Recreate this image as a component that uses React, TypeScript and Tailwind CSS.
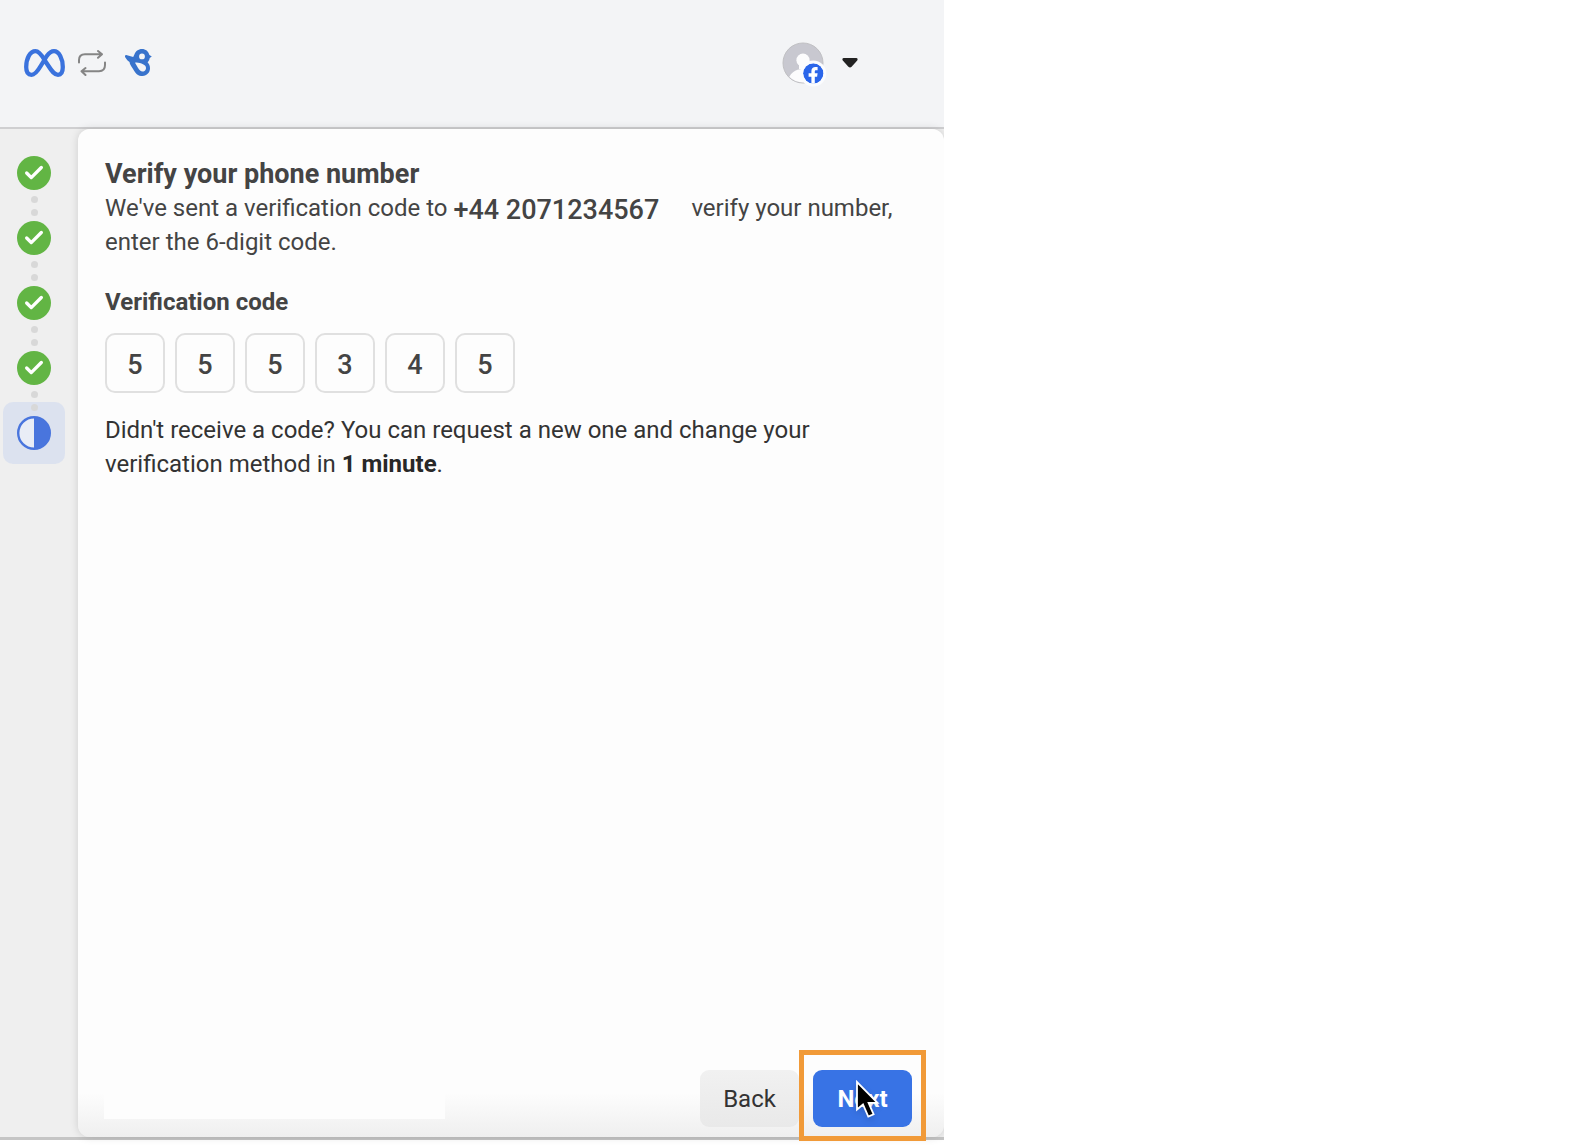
import React, { useState } from "react";
import { Check } from "lucide-react";

const steps = [
  { id: "business", label: "Business details", done: true },
  { id: "account", label: "WhatsApp account", done: true },
  { id: "profile", label: "Business profile", done: true },
  { id: "phone", label: "Phone number", done: true },
  { id: "verify", label: "Verify number", done: false },
];

function MetaLogo() {
  return (
    <svg viewBox="0 0 41 28" className="h-7 w-[41px]" fill="none" aria-hidden="true">
      <path
        d="M20.5 11C17 5 14.5 2.2 11.5 2.2C6 2.2 2.2 9.5 2.2 18C2.2 23 4.2 25.8 7.5 25.8C11 25.8 13.5 22.5 17 16.5L22.8 7C25.5 3.3 27.5 2.2 30 2.2C35 2.2 38.8 9.5 38.8 18C38.8 23 37 25.8 34 25.8C30.5 25.8 28 22.5 24.5 17Z"
        stroke="#3a72dd"
        strokeWidth="4.3"
        strokeLinejoin="round"
      />
    </svg>
  );
}

function SwapIcon() {
  return (
    <svg viewBox="0 0 28 26" className="h-[26px] w-7" fill="none" stroke="#858585" strokeWidth="2" strokeLinecap="round" strokeLinejoin="round" aria-hidden="true">
      <path d="M1 12.5V10Q1 4.2 7 4.2H23.5M20 1L24 4.2L20 7.8" />
      <path d="M27 12.5V15Q27 21.2 21 21.2H4.5M7.5 18L3.5 21.2L7.5 25" />
    </svg>
  );
}

function BirdLogo() {
  return (
    <svg viewBox="0 0 27 27" className="h-[27px] w-[27px]" fill="#3873cc" aria-hidden="true">
      <path
        fillRule="evenodd"
        d="M1.2 6.1C0 6 -.3 7.3.2 8.3C1.5 10.6 3.2 12.3 4.6 13.1C4.4 15 7 18.5 10.3 23.4C12.2 26.2 14.7 27.2 17.5 27C22 26.7 25 23.4 25 19.2C25 16.5 23.9 14.7 22.6 13.3C23.9 12 24.6 10.5 24.7 9.1L26.8 7.6L24.4 6C23.5 2.3 20.6 0 17 0C13.2 0 10.5 2.3 9.5 5.3L8.2 8.1ZM17 4.5A2.9 2.9 0 1 1 17 10.3A2.9 2.9 0 1 1 17 4.5ZM10 13.7C13 13.2 15.5 14.2 18 15.3C20.4 16.3 21.5 18.2 20.8 20.2C20 22.6 17 23.4 15.1 21.6C13.5 20 12.2 17.4 10 13.7Z"
      />
    </svg>
  );
}

function Avatar() {
  return (
    <svg viewBox="0 -2 46 46" className="h-[46px] w-[46px] overflow-visible" aria-hidden="true">
      <defs>
        <clipPath id="avatar-disc">
          <circle cx="21" cy="21" r="19.5" />
        </clipPath>
        <clipPath id="badge-disc">
          <circle cx="31.3" cy="31.5" r="10.2" />
        </clipPath>
      </defs>
      <circle cx="21" cy="21" r="20" fill="#c8c8d0" stroke="#c0c0c3" />
      <g fill="#fcfcfd" clipPath="url(#avatar-disc)">
        <circle cx="21" cy="18.2" r="6.6" />
        <path d="M17 22H25V27H17Z" />
        <path d="M5 42C7 31 13 27 21 27S35 31 37 42Z" />
      </g>
      <circle cx="31.3" cy="31.5" r="13" fill="#fbfcfe" />
      <g clipPath="url(#badge-disc)">
        <circle cx="31.3" cy="31.5" r="10.2" fill="#2b66ea" />
        <path d="M29.4 42V34.8H26.6V31.3H29.4V29.2C29.4 26.4 31.1 25.1 33.5 25.1H35.6V28.2H34.2C33.1 28.2 32.8 28.7 32.8 29.6V31.3H35.6L35.1 34.8H32.8V42Z" fill="#fff" />
      </g>
    </svg>
  );
}

function Pointer() {
  return (
    <svg viewBox="0 0 28 42" className="absolute top-2.5 left-[43px] h-[42px] w-7 pointer-events-none drop-shadow-md" aria-hidden="true">
      <path
        d="M1 2V29.5L7 24.5L12.3 36.6L17.6 34.3L12.6 22.8H21.5Z"
        fill="#000"
        stroke="#fff"
        strokeWidth="1.8"
      />
    </svg>
  );
}

export default function App() {
  const [code, setCode] = useState(["5", "5", "5", "3", "4", "5"]);

  const updateDigit = (index: number, value: string) => {
    setCode((prev) => prev.map((digit, i) => (i === index ? value : digit)));
  };

  return (
    <div className="min-h-screen bg-white pb-1.5 flex font-['Roboto',sans-serif] text-[#444]">
      <div className="w-full max-w-[944px] flex flex-col bg-[#efefef] border-b-3 border-[#c5c5c5] overflow-x-clip">
        {/* Top bar */}
        <header className="h-[129px] shrink-0 bg-[#f3f4f6] border-b-2 border-[#cfcfd1] pl-6 pr-[86px] pb-0.5 flex items-center justify-between">
          <div className="flex items-center">
            <MetaLogo />
            <span className="ml-[13px]"><SwapIcon /></span>
            <span className="ml-[19px]"><BirdLogo /></span>
          </div>
          <button type="button" aria-label="Account menu" className="flex items-center gap-3.5">
            <Avatar />
            <svg viewBox="0 0 16 10" className="h-2.5 w-4" fill="#222" aria-hidden="true">
              <path d="M1.5 0H14.5Q16.5 .8 15 2.8L9.6 8.8Q8 10.4 6.4 8.8L1 2.8Q-.5 .8 1.5 0Z" />
            </svg>
          </button>
        </header>

        <div className="flex-1 flex">
          {/* Progress rail */}
          <ol className="w-[78px] shrink-0 pt-[27px] pl-[3px]">
            {steps.map((step) =>
              step.done ? (
                <li key={step.id} aria-label={step.label} className="w-[62px] flex flex-col items-center">
                  <span className="size-[34px] rounded-full bg-[#62b544] flex items-center justify-center">
                    <Check className="size-[22px] text-white" strokeWidth={3.6} />
                  </span>
                  <span className="h-[31px] flex flex-col items-center justify-center gap-1.5">
                    <span className="size-[7px] rounded-full bg-[#d8d8d8]" />
                    <span className="size-[7px] rounded-full bg-[#d8d8d8]" />
                  </span>
                </li>
              ) : (
                <li key={step.id} aria-label={step.label} aria-current="step" className="-mt-3.5 size-[62px] rounded-[10px] bg-[#c1cff0]/40 flex items-center justify-center">
                  <svg viewBox="0 0 34 34" className="size-[34px]" aria-hidden="true">
                    <circle cx="17" cy="17" r="15.8" fill="#e9edf6" stroke="#4975dd" strokeWidth="2.4" />
                    <path d="M17 1A16 16 0 0 1 17 33Z" fill="#4975dd" />
                  </svg>
                </li>
              )
            )}
          </ol>

          <main className="flex-1 flex flex-col rounded-xl bg-linear-to-t from-[#efefef] to-[#fdfdfd] to-[44px] shadow-[0_0_8px_rgba(0,0,0,0.14)]">
            <div className="flex-1 pl-[27px] pr-10 pt-7">
              <h1 className="text-[27px] leading-[34px] font-bold">Verify your phone number</h1>
              <p className="text-[24px] leading-[34px]">
                We've sent a verification code to{" "}
                <span className="inline-block w-[232px] h-[34px] align-top pt-0.5 text-[27px] font-medium">+44 2071234567</span>{" "}
                verify your number, enter the 6-digit code.
              </p>

              <fieldset className="mt-[26px]">
                <legend className="text-[24px] leading-[34px] font-bold">Verification code</legend>
                <div className="mt-3.5 flex gap-2.5">
                  {code.map((digit, idx) => (
                    <input
                      key={idx}
                      type="text"
                      inputMode="numeric"
                      maxLength={1}
                      aria-label={`Digit ${idx + 1}`}
                      value={digit}
                      onChange={(e) => updateDigit(idx, e.target.value)}
                      className="size-[60px] rounded-[10px] border-2 border-[#e0e0e0] bg-[#fdfdfd] pt-1 text-center text-[27px] font-medium outline-none focus:border-[#3873e5]"
                    />
                  ))}
                </div>
              </fieldset>

              <p className="mt-5 text-[24px] leading-[34px] text-[#333]">
                Didn't receive a code? You can request a new one and change your verification method in{" "}
                <strong className="font-bold text-[#282828]">1 minute</strong>.
              </p>
            </div>

            <footer className="pl-[26px] pr-8 pb-2.5 flex items-end justify-between">
              <div className="mb-2 h-8 w-[341px] bg-[#fdfdfd]" />
              <div className="flex gap-3.5 text-[24px]">
                <button type="button" className="h-[57px] w-[99px] rounded-[9px] bg-linear-to-b from-[#f1f1f1] to-[#e9e9e9] text-[#333]">
                  Back
                </button>
                <div className="relative">
                  <button type="button" className="h-[57px] w-[99px] rounded-[9px] bg-[#3873e5] font-bold text-white">
                    Next
                  </button>
                  <div className="absolute -top-5 -right-3.5 -bottom-3.5 -left-3.5 border-5 border-[#f19a38] pointer-events-none" />
                  <Pointer />
                </div>
              </div>
            </footer>
          </main>
        </div>
      </div>
    </div>
  );
}
